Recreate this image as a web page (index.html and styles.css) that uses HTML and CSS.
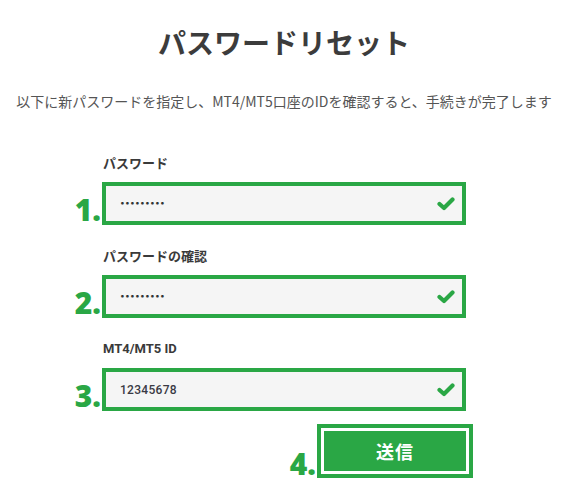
FILE: index.html
```html
<!DOCTYPE html>
<html lang="ja">
<head>
<meta charset="utf-8">
<title>パスワードリセット</title>
<link rel="stylesheet" href="styles.css">
</head>
<body>
<main class="page">
  <h1 class="title">パスワードリセット</h1>
  <p class="lead">以下に新パスワードを指定し、MT4/MT5口座のIDを確認すると、手続きが完了します</p>
  <form class="form">
    <div class="group">
      <label class="label">パスワード</label>
      <div class="field">
        <span class="step">1.</span>
        <span class="value dots">•••••••••</span>
        <svg class="check" width="18" height="14" viewBox="0 0 18 14"><polyline points="2.5,7 7,11 15.5,2.5" fill="none" stroke="#2aa745" stroke-width="4.2" stroke-linecap="round" stroke-linejoin="round"/></svg>
      </div>
    </div>
    <div class="group">
      <label class="label">パスワードの確認</label>
      <div class="field">
        <span class="step">2.</span>
        <span class="value dots">•••••••••</span>
        <svg class="check" width="18" height="14" viewBox="0 0 18 14"><polyline points="2.5,7 7,11 15.5,2.5" fill="none" stroke="#2aa745" stroke-width="4.2" stroke-linecap="round" stroke-linejoin="round"/></svg>
      </div>
    </div>
    <div class="group">
      <label class="label latin">MT4/MT5 ID</label>
      <div class="field">
        <span class="step">3.</span>
        <span class="value num">12345678</span>
        <svg class="check" width="18" height="14" viewBox="0 0 18 14"><polyline points="2.5,7 7,11 15.5,2.5" fill="none" stroke="#2aa745" stroke-width="4.2" stroke-linecap="round" stroke-linejoin="round"/></svg>
      </div>
    </div>
    <div class="actions">
      <div class="submit-wrap">
        <span class="step">4.</span>
        <button type="button" class="submit">送信</button>
      </div>
    </div>
  </form>
</main>
</body>
</html>
```

FILE: styles.css
```css
* { box-sizing: border-box; }

html, body {
  min-height: 100%;
}

body {
  margin: 0;
  background: #fff;
  font-family: "Noto Sans CJK JP", "Noto Sans", sans-serif;
  color: #444;
}

.page {
  width: 568px;
  min-height: 491px;
  padding-bottom: 21px;
}

.title {
  margin: 0;
  padding-top: 22px;
  font-size: 28px;
  line-height: 40px;
  font-weight: 700;
  color: #3c3c3c;
  text-align: center;
}

.lead {
  margin: 29px 0 0;
  font-size: 14px;
  line-height: 20px;
  color: #555;
  text-align: center;
}

.form {
  width: 364px;
  margin: 43px 0 0 102px;
}

.group + .group {
  margin-top: 22px;
}

.label {
  display: block;
  font-size: 13px;
  line-height: 18px;
  font-weight: 700;
  color: #3a3a3a;
  padding-left: 1px;
}

.label.latin {
  font-family: "Roboto", "Noto Sans CJK JP", sans-serif;
}

.field {
  position: relative;
  margin-top: 10px;
  height: 43px;
  border: 4px solid #2aa745;
  background: #f5f5f5;
  display: flex;
  align-items: center;
  padding: 0 7px 0 14px;
}

.value {
  flex: 1;
  color: #333;
}

.dots {
  font-family: "DejaVu Sans", sans-serif;
  font-size: 7.5px;
  letter-spacing: 0.2px;
  font-weight: 700;
}

.num {
  font-family: "Roboto", sans-serif;
  font-size: 12px;
  font-weight: 500;
  color: #3a3a44;
  letter-spacing: 0.3px;
}

.check {
  display: block;
}

.step {
  position: absolute;
  right: calc(100% + 5px);
  bottom: -8px;
  font-family: "Open Sans", sans-serif;
  font-size: 30px;
  line-height: 38px;
  font-weight: 800;
  color: #2aa745;
}

.actions {
  display: flex;
  justify-content: flex-end;
  margin-top: 20px;
}

.submit-wrap {
  position: relative;
}

.submit {
  display: block;
  width: 142px;
  height: 40px;
  border: 0;
  padding: 0;
  background: #2aa745;
  color: #fff;
  font-family: "Noto Sans CJK JP", sans-serif;
  font-size: 18px;
  font-weight: 700;
  letter-spacing: 1px;
  box-shadow: 0 0 0 3px #fff, 0 0 0 7px #2aa745;
}

.submit-wrap .step {
  right: calc(100% + 8px);
  bottom: -12px;
}
```
